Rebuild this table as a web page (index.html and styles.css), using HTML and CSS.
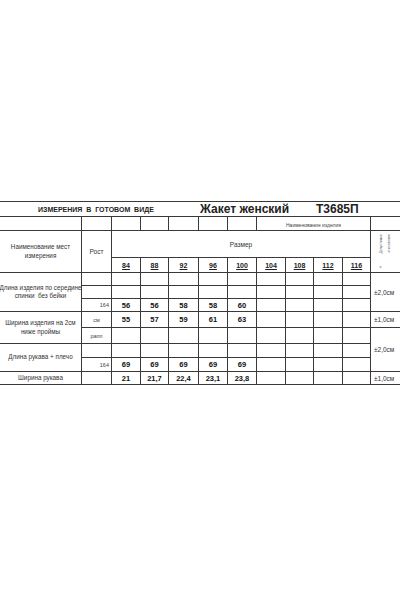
FILE: index.html
```html
<!DOCTYPE html>
<html lang="ru">
<head>
<meta charset="utf-8">
<title>Измерения в готовом виде</title>
<link rel="stylesheet" href="styles.css">
</head>
<body>
<div class="sheet">
  <div class="grid">
    <!-- title row -->
    <div class="c title span-all">
      <span class="t-main">ИЗМЕРЕНИЯ&nbsp; В&nbsp; ГОТОВОМ&nbsp; ВИДЕ</span>
      <span class="t-name">Жакет женский</span>
      <span class="t-code">Т3685П</span>
    </div>
    <!-- small caption row -->
    <div class="c"></div>
    <div class="c"></div>
    <div class="c"></div>
    <div class="c"></div>
    <div class="c"></div>
    <div class="c"></div>
    <div class="c"></div>
    <div class="c span4 tiny">Наименование изделия</div>
    <div class="c last"></div>
    <!-- header -->
    <div class="c rs2 name">Наименование мест<br>измерения</div>
    <div class="c rs2 hdr">Рост</div>
    <div class="c span9 hdr">Размер</div>
    <div class="c last rs2 vert">
      <span class="vcol">
        <span class="vl">Допустимое</span>
        <span class="vl vpm">±</span>
      </span>
      <span class="vcol">
        <span class="vl">отклонение</span>
      </span>
    </div>
    <div class="c sz">84</div>
    <div class="c sz">88</div>
    <div class="c sz">92</div>
    <div class="c sz">96</div>
    <div class="c sz">100</div>
    <div class="c sz">104</div>
    <div class="c sz">108</div>
    <div class="c sz">112</div>
    <div class="c sz">116</div>

    <!-- Длина изделия -->
    <div class="c rs3 name">Длина изделия по середине<br>спинки&nbsp; без бейки</div>
    <div class="c"></div>
    <div class="c"></div><div class="c"></div><div class="c"></div><div class="c"></div><div class="c"></div><div class="c"></div><div class="c"></div><div class="c"></div><div class="c"></div>
    <div class="c last rs3 tol">±2,0см</div>
    <div class="c"></div>
    <div class="c"></div><div class="c"></div><div class="c"></div><div class="c"></div><div class="c"></div><div class="c"></div><div class="c"></div><div class="c"></div><div class="c"></div>
    <div class="c rost-r">164</div>
    <div class="c num">56</div><div class="c num">56</div><div class="c num">58</div><div class="c num">58</div><div class="c num">60</div>
    <div class="c"></div><div class="c"></div><div class="c"></div><div class="c"></div>

    <!-- Ширина изделия -->
    <div class="c rs2 name">Ширина изделия на 2см<br>ниже проймы</div>
    <div class="c rost">см</div>
    <div class="c num">55</div><div class="c num">57</div><div class="c num">59</div><div class="c num">61</div><div class="c num">63</div>
    <div class="c"></div><div class="c"></div><div class="c"></div><div class="c"></div>
    <div class="c last tol">±1,0см</div>
    <div class="c rost">рапп</div>
    <div class="c"></div><div class="c"></div><div class="c"></div><div class="c"></div><div class="c"></div><div class="c"></div><div class="c"></div><div class="c"></div><div class="c"></div>
    <div class="c last rs3 tol">±2,0см</div>

    <!-- Длина рукава -->
    <div class="c rs2 name">Длина рукава + плечо</div>
    <div class="c"></div>
    <div class="c"></div><div class="c"></div><div class="c"></div><div class="c"></div><div class="c"></div><div class="c"></div><div class="c"></div><div class="c"></div><div class="c"></div>
    <div class="c rost-r">164</div>
    <div class="c num">69</div><div class="c num">69</div><div class="c num">69</div><div class="c num">69</div><div class="c num">69</div>
    <div class="c"></div><div class="c"></div><div class="c"></div><div class="c"></div>

    <!-- Ширина рукава -->
    <div class="c name">Ширина рукава</div>
    <div class="c"></div>
    <div class="c num">21</div><div class="c num">21,7</div><div class="c num">22,4</div><div class="c num">23,1</div><div class="c num">23,8</div>
    <div class="c"></div><div class="c"></div><div class="c"></div><div class="c"></div>
    <div class="c last tol">±1,0см</div>
  </div>
</div>
</body>
</html>
```

FILE: styles.css
```css
html, body {
  margin: 0;
  padding: 0;
  background: #ffffff;
}

body {
  width: 400px;
  height: 600px;
  overflow: hidden;
  font-family: "Liberation Sans", Arial, sans-serif;
  color: #222;
}

.sheet {
  padding-top: 201px;
}

.grid {
  display: grid;
  width: 400px;
  grid-template-columns: 82px 30px 29px 28px 30px 29px 29px 29px 28px 29px 28px 29px;
  grid-template-rows: 15px 14px 27px 15px 13px 13px 13px 16px 16px 14px 14px 13px;
  border-top: 1px solid #3a3a3a;
}

.c {
  box-sizing: border-box;
  border-right: 1px solid #3a3a3a;
  border-bottom: 1px solid #3a3a3a;
  min-width: 0;
  overflow: hidden;
}

.last {
  border-right: none;
}

.span-all {
  grid-column: 1 / -1;
  border-right: none;
}

.span4 {
  grid-column: span 4;
}

.span9 {
  grid-column: span 9;
}

.rs2 {
  grid-row: span 2;
}

.rs3 {
  grid-row: span 3;
}

.title {
  display: flex;
  align-items: center;
  font-weight: bold;
}

.t-main {
  width: 162px;
  padding-left: 38px;
  font-size: 7px;
  white-space: nowrap;
}

.t-name {
  width: 116px;
  font-size: 12px;
  white-space: nowrap;
}

.t-code {
  font-size: 12px;
  white-space: nowrap;
}

.tiny {
  display: flex;
  align-items: center;
  justify-content: center;
  font-size: 5px;
  color: #444;
  padding-top: 2px;
}

.name {
  display: flex;
  align-items: center;
  justify-content: center;
  text-align: center;
  font-size: 6.3px;
  line-height: 1.35;
  color: #333;
  white-space: nowrap;
}

.hdr {
  display: flex;
  align-items: center;
  justify-content: center;
  font-size: 6.5px;
  color: #333;
}

.sz {
  display: flex;
  align-items: center;
  justify-content: center;
  font-size: 7px;
  font-weight: bold;
  text-decoration: underline;
}

.num {
  display: flex;
  align-items: center;
  justify-content: center;
  font-size: 7.5px;
  font-weight: bold;
  color: #111;
}

.rost {
  display: flex;
  align-items: center;
  justify-content: center;
  font-size: 5.5px;
  color: #444;
}

.rost-r {
  display: flex;
  align-items: center;
  justify-content: flex-end;
  padding-right: 2px;
  font-size: 5.5px;
  color: #444;
}

.tol {
  display: flex;
  align-items: center;
  padding-left: 3px;
  font-size: 6.5px;
  color: #333;
  white-space: nowrap;
}

.vert {
  display: flex;
  justify-content: center;
  gap: 5px;
  padding: 3px 0 2px;
}

.vcol {
  display: flex;
  flex-direction: column;
  justify-content: space-between;
  align-items: center;
}

.vl {
  writing-mode: vertical-rl;
  transform: rotate(180deg);
  font-size: 3.5px;
  color: #555;
  line-height: 1;
  white-space: nowrap;
}

.vpm {
  font-size: 4px;
}
```
